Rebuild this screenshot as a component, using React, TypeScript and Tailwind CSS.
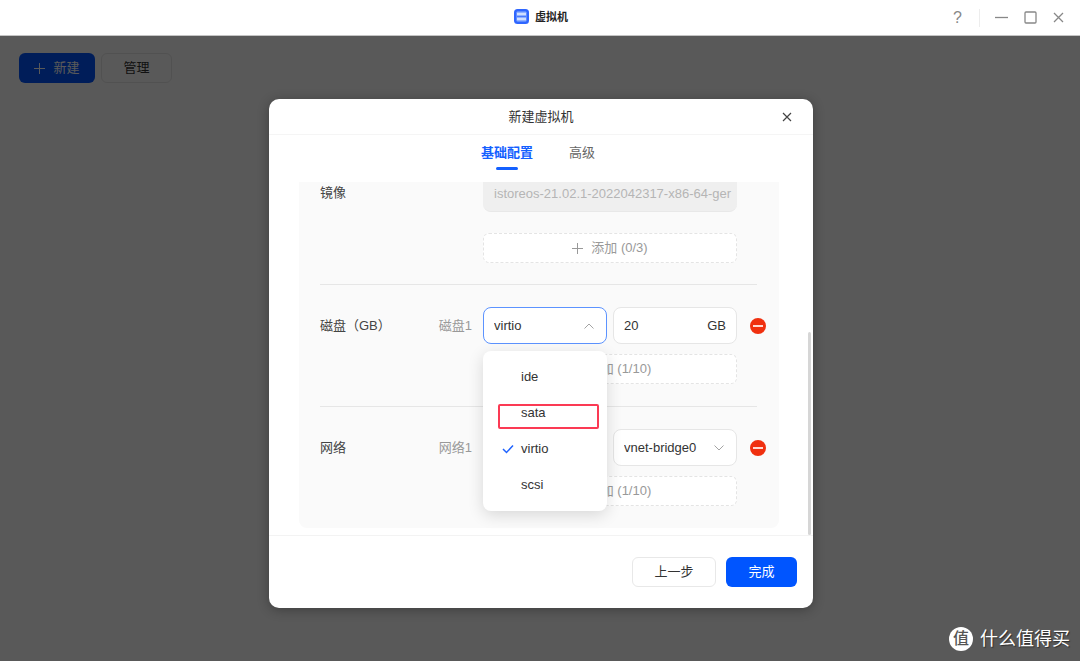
import { useState } from "react";
import type { ReactNode } from "react";

const diskBuses = ["ide", "sata", "virtio", "scsi"];

function PlusIcon() {
  return (
    <svg width="11" height="11" viewBox="0 0 11 11" fill="none" stroke="currentColor" aria-hidden="true">
      <path d="M5.5 0v11M0 5.5h11" />
    </svg>
  );
}

function Chevron({ up = false }: { up?: boolean }) {
  return (
    <svg
      width="10"
      height="6"
      viewBox="0 0 10 6"
      fill="none"
      stroke="#a3a3a3"
      className="pointer-events-none absolute right-[13px] top-1/2 -translate-y-1/2"
      aria-hidden="true"
    >
      <path d={up ? "M0.5 5.5L5 1l4.5 4.5" : "M0.5 0.5L5 5l4.5-4.5"} />
    </svg>
  );
}

function AddButton({ count }: { count: string }) {
  return (
    <button
      type="button"
      className="flex h-[30px] w-full items-center justify-center gap-2 rounded-md border border-dashed border-[#e4e4e4] bg-white text-[#999]"
    >
      <PlusIcon />
      添加 ({count})
    </button>
  );
}

function RemoveButton({ label }: { label: string }) {
  return (
    <button type="button" aria-label={label} className="h-4 w-4 shrink-0">
      <svg width="16" height="16" viewBox="0 0 16 16" aria-hidden="true">
        <circle cx="8" cy="8" r="8" fill="#f0300f" />
        <rect x="3" y="7" width="10" height="2" fill="#ffd9d2" />
      </svg>
    </button>
  );
}

function Row({ title, name, children, action, add }: { title: string; name: string; children: ReactNode; action: ReactNode; add: string }) {
  return (
    <section className="pt-[22px] pb-[22px]">
      <div className="flex h-[37px] items-center">
        <h3 className="flex-1 text-[#444]">{title}</h3>
        <span className="mr-[11px] text-[#999]">{name}</span>
        <div className="grid w-[254px] grid-cols-2 gap-1.5">{children}</div>
        <div className="ml-[13px] flex">{action}</div>
      </div>
      <div className="mt-2.5 mr-[29px] ml-auto w-[254px]">
        <AddButton count={add} />
      </div>
    </section>
  );
}

function BusMenu({ value, onSelect }: { value: string; onSelect: (v: string) => void }) {
  return (
    <div
      role="listbox"
      aria-label="总线类型"
      className="absolute top-full left-0 z-10 mt-[7px] w-full rounded-lg bg-white py-2 shadow-[0_4px_16px_rgba(0,0,0,0.14)]"
    >
      {diskBuses.map((bus) => (
        <button
          key={bus}
          type="button"
          role="option"
          aria-selected={bus === value}
          onClick={() => onSelect(bus)}
          className="flex h-9 w-full items-center pl-[19px] text-left text-[#333]"
        >
          <span className="w-[19px]">
            {bus === value && (
              <svg width="12" height="10" viewBox="0 0 12 10" fill="none" stroke="#1f63ff" strokeWidth="1.5" aria-hidden="true">
                <path d="M1 5l3.5 3.5L11 1.5" />
              </svg>
            )}
          </span>
          {bus}
        </button>
      ))}
      {/* highlight frame around sata */}
      <div className="pointer-events-none absolute top-[53px] left-[15px] h-[25px] w-[101px] rounded-xs border-2 border-[#fb3a54]" />
    </div>
  );
}

function TitleBar() {
  return (
    <header className="relative flex h-9 items-center justify-end border-b border-[#c4c4c4] bg-white pr-4">
      <div className="absolute inset-0 flex items-center justify-center gap-1.5 pb-0.5 pl-0.5">
        <svg width="15" height="15" viewBox="0 0 15 15" aria-hidden="true">
          <rect width="15" height="15" rx="3.5" fill="#2f66ff" />
          <rect x="2.5" y="2.5" width="10" height="10" rx="1" fill="#8fb1ff" />
          <path d="M3 5h9M3 10h9" stroke="#e6eeff" strokeWidth="1.6" />
          <path d="M3 7.5h9" stroke="#4a7bff" />
        </svg>
        <h1 className="text-[11px] font-bold text-[#222]">虚拟机</h1>
      </div>
      <div className="relative flex items-center text-[#888]">
        <button type="button" aria-label="帮助" className="mr-[17px] text-base leading-4">
          ?
        </button>
        <span className="mr-[15px] h-[18px] w-px bg-[#ededed]" />
        <button type="button" aria-label="最小化" className="mr-4">
          <svg width="13" height="13" viewBox="0 0 13 13" fill="none" stroke="currentColor" strokeWidth="1.3">
            <path d="M0 6.5h13" />
          </svg>
        </button>
        <button type="button" aria-label="最大化" className="mr-4">
          <svg width="13" height="13" viewBox="0 0 13 13" fill="none" stroke="currentColor" strokeWidth="1.3">
            <rect x="1" y="1" width="11" height="11" rx="1" />
          </svg>
        </button>
        <button type="button" aria-label="关闭">
          <svg width="11" height="11" viewBox="0 0 11 11" fill="none" stroke="currentColor" strokeWidth="1.3">
            <path d="M1 1l9 9M10 1l-9 9" />
          </svg>
        </button>
      </div>
    </header>
  );
}

export default function App() {
  const [bus, setBus] = useState("virtio");
  const [open, setOpen] = useState(true);
  const [tab, setTab] = useState("基础配置");

  return (
    <div className="flex min-h-screen flex-col bg-white font-['Liberation_Sans','Noto_Sans_CJK_SC',sans-serif] text-[13px] leading-5">
      <TitleBar />

      <main className="relative flex flex-1">
        <div className="flex flex-1 items-start gap-1.5 pt-[17px] pl-[19px]">
          <button type="button" className="flex h-[30px] w-[76px] items-center justify-center gap-2 rounded-md bg-[#0055ff] text-white">
            <PlusIcon />
            新建
          </button>
          <button type="button" className="h-[30px] w-[71px] rounded-md border border-[#e8e8e8] text-[#333]">
            管理
          </button>
        </div>

        <div className="absolute inset-0 flex items-start justify-center bg-black/65 pt-[63px] pl-0.5">
          <div
            role="dialog"
            aria-label="新建虚拟机"
            className="w-[544px] rounded-[10px] bg-white shadow-[0_2px_12px_rgba(0,0,0,0.3)]"
          >
            <div className="relative flex h-9 items-center justify-center border-b border-[#f5f5f5]">
              <h2 className="text-[#333]">新建虚拟机</h2>
              <button type="button" aria-label="关闭" className="absolute right-[21px] text-[#444]">
                <svg width="10" height="10" viewBox="0 0 10 10" fill="none" stroke="currentColor" strokeWidth="1.2">
                  <path d="M1 1l8 8M9 1l-8 8" />
                </svg>
              </button>
            </div>

            <nav className="flex h-[47px] items-start justify-center gap-9 pt-2 pr-1.5">
              {["基础配置", "高级"].map((t) => (
                <button
                  key={t}
                  type="button"
                  onClick={() => setTab(t)}
                  className={t === tab ? "flex flex-col items-center font-bold text-[#1460ff]" : "text-[#666]"}
                >
                  {t}
                  {t === tab && <span className="mt-1 h-[3px] w-[22px] rounded-xs bg-[#1460ff]" />}
                </button>
              ))}
            </nav>

            <div className="relative pr-[34px] pb-[7px] pl-[30px]">
              <div className="rounded-b-lg bg-[#fafafa] pr-[13px] pl-[21px]">
                <section className="flex items-start pb-[21px]">
                  <label htmlFor="image" className="flex-1 pt-px text-[#444]">
                    镜像
                  </label>
                  <div className="mr-[29px] w-[254px]">
                    <input
                      id="image"
                      disabled
                      value="istoreos-21.02.1-2022042317-x86-64-ger"
                      className="block h-[30px] w-full rounded-b-lg border-b border-[#e8e8e8] bg-[#efefef] pr-0.5 pb-[7px] pl-[11px] text-[#b5b5b5]"
                    />
                    <div className="mt-[21px]">
                      <AddButton count="0/3" />
                    </div>
                  </div>
                </section>

                <hr className="mr-[9px] border-[#e6e6e6]" />

                <Row title="磁盘（GB）" name="磁盘1" add="1/10" action={<RemoveButton label="删除磁盘1" />}>
                  <div className="relative">
                    <select
                      aria-label="磁盘1 总线"
                      value={bus}
                      onChange={(e) => setBus(e.target.value)}
                      onClick={() => setOpen(!open)}
                      className="block h-[37px] w-full appearance-none rounded-lg border border-[#5c93ff] bg-white pl-2.5 text-[#333]"
                    >
                      {diskBuses.map((b) => (
                        <option key={b}>{b}</option>
                      ))}
                    </select>
                    <Chevron up={open} />
                    {open && (
                      <BusMenu
                        value={bus}
                        onSelect={(v) => {
                          setBus(v);
                          setOpen(false);
                        }}
                      />
                    )}
                  </div>
                  <label className="flex h-[37px] items-center rounded-lg border border-[#e6e6e6] bg-white px-2.5 text-[#333]">
                    <input aria-label="磁盘1 容量" defaultValue="20" className="w-full min-w-0 outline-none" />
                    GB
                  </label>
                </Row>

                <hr className="mr-[9px] border-[#e6e6e6]" />

                <Row title="网络" name="网络1" add="1/10" action={<RemoveButton label="删除网络1" />}>
                  <div className="relative">
                    <select
                      aria-label="网络1 类型"
                      className="block h-[37px] w-full appearance-none rounded-lg border border-[#e6e6e6] bg-white pl-2.5 text-[#333]"
                    >
                      <option>virtio</option>
                    </select>
                    <Chevron />
                  </div>
                  <div className="relative">
                    <select
                      aria-label="网络1 网桥"
                      className="block h-[37px] w-full appearance-none rounded-lg border border-[#e6e6e6] bg-white pl-2.5 text-[#333]"
                    >
                      <option>vnet-bridge0</option>
                    </select>
                    <Chevron />
                  </div>
                </Row>
              </div>
              {/* scrollbar thumb */}
              <div className="absolute right-0.5 bottom-0 h-[203px] w-[3px] rounded-full bg-[#d6d6d6]" />
            </div>

            <div className="flex h-[73px] items-center justify-end gap-2.5 border-t border-[#f3f3f3] pr-4">
              <button type="button" className="h-[30px] w-[84px] rounded-md border border-[#e8e8e8] text-[#333]">
                上一步
              </button>
              <button type="button" className="h-[30px] w-[71px] rounded-md bg-[#0055ff] text-white">
                完成
              </button>
            </div>
          </div>
        </div>

        <div className="absolute right-2.5 bottom-2.5 flex items-center gap-[7px] text-white">
          <span className="flex h-6 w-6 items-center justify-center rounded-full bg-white text-base leading-none font-medium text-[#555]">
            值
          </span>
          <span className="text-lg leading-6 [text-shadow:1px_1px_1px_rgba(0,0,0,0.5)]">什么值得买</span>
        </div>
      </main>
    </div>
  );
}
